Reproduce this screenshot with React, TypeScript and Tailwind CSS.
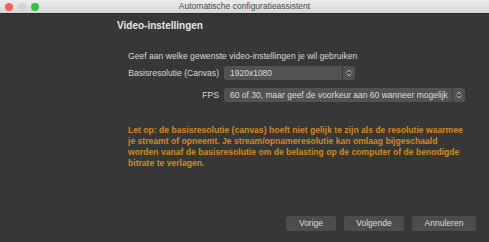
const font = { fontFamily: '"Liberation Sans", Arial, sans-serif' };

function Chevrons() {
  return (
    <svg width="6" height="8" viewBox="0 0 6 8" fill="none" stroke="#bdbdbd" strokeWidth="1" strokeLinecap="round" strokeLinejoin="round">
      <path d="M1 3 L3 1 L5 3" />
      <path d="M1 5 L3 7 L5 5" />
    </svg>
  );
}

function Select({ value, width }: { value: string; width: string }) {
  return (
    <div className={`flex h-[14px] items-stretch rounded-[3px] bg-[#525252] ${width}`}>
      <div className="flex flex-1 items-center overflow-hidden whitespace-nowrap pl-[6px] text-[8.5px] text-[#dcdcdc]">
        {value}
      </div>
      <div className="flex w-[13px] items-center justify-center border-l border-[#3c3c3c]">
        <Chevrons />
      </div>
    </div>
  );
}

function Button({ label, width }: { label: string; width: string }) {
  return (
    <button className={`h-[15px] rounded-[3px] bg-[#4d4d4d] text-[8.5px] text-[#dcdcdc] ${width}`}>
      {label}
    </button>
  );
}

export default function App() {
  return (
    <div className="flex h-[242px] w-[489px] flex-col overflow-hidden bg-[#373737]" style={font}>
      <div className="relative flex h-[14px] items-center justify-center border-b border-[#2a2a2a] bg-gradient-to-b from-[#ececec] to-[#d6d6d6]">
        <div className="absolute left-[5px] top-[3px] flex gap-[5px]">
          <span className="h-[8px] w-[8px] rounded-full bg-[#fc5f57]" />
          <span className="h-[8px] w-[8px] rounded-full bg-[#d2d2d2]" />
          <span className="h-[8px] w-[8px] rounded-full bg-[#2cc63f]" />
        </div>
        <span className="text-[8.5px] text-[#4a4a4a]">Automatische configuratieassistent</span>
      </div>

      <div className="flex flex-1 flex-col pl-[117px]">
        <h1 className="mt-[6px] text-[10px] font-bold leading-[12px] text-[#e6e6e6]">Video-instellingen</h1>

        <div className="ml-[11px] mt-[19px] flex flex-col">
          <p className="text-[8.6px] leading-[11px] text-[#d8d8d8]">
            Geef aan welke gewenste video-instellingen je wil gebruiken
          </p>

          <div className="mt-[4px] grid grid-cols-[91px_auto] items-center gap-x-[5px] gap-y-[8px]">
            <span className="text-right text-[8.6px] text-[#d8d8d8]">Basisresolutie (Canvas)</span>
            <Select value="1920x1080" width="w-[131px]" />
            <span className="text-right text-[8.6px] text-[#d8d8d8]">FPS</span>
            <Select value="60 of 30, maar geef de voorkeur aan 60 wanneer mogelijk" width="w-[241px]" />
          </div>

          <p className="mt-[23px] w-[335px] text-[8.6px] font-bold leading-[11px] text-[#d28a19]">
            Let op: de basisresolutie (canvas) hoeft niet gelijk te zijn als de resolutie waarmee je streamt of opneemt. Je stream/opnameresolutie kan omlaag bijgeschaald worden vanaf de basisresolutie om de belasting op de computer of de benodigde bitrate te verlagen.
          </p>
        </div>

        <div className="mb-[11px] mr-[13px] mt-auto flex justify-end gap-[8px]">
          <Button label="Vorige" width="w-[50px]" />
          <Button label="Volgende" width="w-[60px]" />
          <Button label="Annuleren" width="w-[64px]" />
        </div>
      </div>
    </div>
  );
}
